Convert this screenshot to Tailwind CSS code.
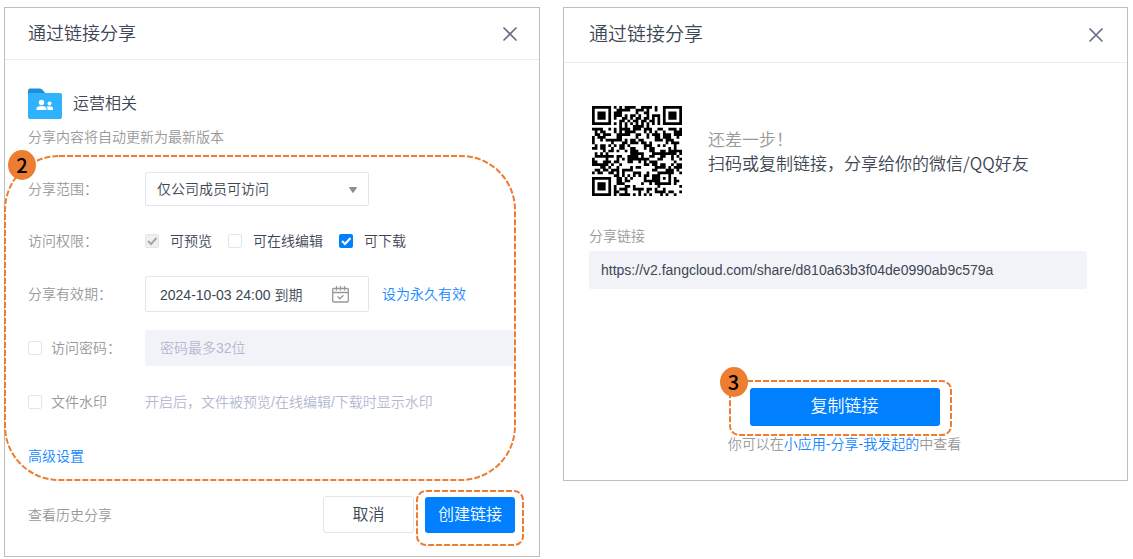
<!DOCTYPE html>
<html lang="zh-CN">
<head>
<meta charset="utf-8">
<meta name="viewport" content="width=device-width, initial-scale=1">
<title>通过链接分享</title>
<script src="https://cdn.jsdelivr.net/npm/@tailwindcss/browser@4"></script>
</head>
<body class="bg-white font-['Liberation_Sans','Noto_Sans_CJK_SC',sans-serif] text-sm font-[350] text-[#3d4653]">
<main class="grid grid-cols-[536fr_565fr] items-start gap-[23px] pt-[7px] pr-[5px] pb-0.5 pl-1">

  <section class="border border-[#bfbfbf]" aria-labelledby="t1">
    <header class="flex h-[52px] items-center justify-between border-b border-[#ebecf0] pr-[22px] pl-[23px]">
      <h1 id="t1" class="text-lg font-[350]">通过链接分享</h1>
      <button type="button" aria-label="关闭">
        <svg class="size-[14px]" viewBox="0 0 14 14" fill="none" stroke="#666e88" stroke-width="1.7" stroke-linecap="round"><path d="M1 1l12 12M13 1L1 13"/></svg>
      </button>
    </header>
    <form class="pt-7">
      <div class="flex h-8 items-center gap-[11px] px-[23px]">
        <svg class="h-8 w-[34px]" viewBox="0 0 34 32"><path d="M0 2.5Q0 .5 2 .5h9.5q1.5 0 2.600 1L17 4.500v8H0z" fill="#2090d6"/><path d="M0 6.500q0-1.500 1.500-1.500H32q2 0 2 2v22q0 2-2 2H2q-2 0-2-2z" fill="#2fb3ff"/><g fill="#fff"><circle cx="13.500" cy="14.500" r="2.700"/><path d="M8.500 22v-1.500q0-2.500 5-2.500t5 2.500V22z"/><circle cx="21.500" cy="15.500" r="2"/><path d="M19.500 22v-1.500q0-1.200-.8-2 .8-.3 2.500-.3 3.800 0 3.800 2.300V22z"/></g></svg>
        <span class="text-base">运营相关</span>
      </div>
      <p class="flex h-[34px] items-center px-[23px] text-[#999]">分享内容将自动更新为最新版本</p>

      <div class="relative pt-[18px] pr-6 pb-3 pl-[23px]">
        <div class="flex h-[34px] items-center">
          <label for="scope" class="w-[117px] shrink-0 text-[#999]">分享范围：</label>
          <div class="relative h-full w-56">
            <select id="scope" class="h-full w-full appearance-none rounded-xs border border-[#e4e5ec] bg-white pl-[11px]"><option>仅公司成员可访问</option></select>
            <svg class="pointer-events-none absolute top-[15px] right-3 h-1.5 w-2" viewBox="0 0 8 6"><path d="M.5 0h7q.7.400.2 1L4.800 5.200q-.8 1-1.600 0L.3 1Q-.2.400.5 0z" fill="#8e8e8e"/></svg>
          </div>
        </div>

        <fieldset class="mt-[23px] flex h-6 items-center">
          <legend class="float-left w-[117px] shrink-0 text-[#999]">访问权限：</legend>
          <div class="flex gap-4">
            <label class="flex items-center gap-[11px]"><span class="grid"><input type="checkbox" checked disabled class="col-start-1 row-start-1 size-[14px] appearance-none rounded-xs border border-[#e4e5ec] bg-[#f0f0f2]"><svg class="col-start-1 row-start-1 size-[14px]" viewBox="0 0 14 14" fill="none" stroke="#a6a6a6" stroke-width="2"><path d="M3 7l3 3 5.500-6"/></svg></span>可预览</label>
            <label class="flex items-center gap-[11px]"><input type="checkbox" class="size-[14px] appearance-none rounded-xs border border-[#e4e5ec] bg-white">可在线编辑</label>
            <label class="flex items-center gap-[11px]"><span class="grid"><input type="checkbox" checked class="col-start-1 row-start-1 size-[14px] appearance-none rounded-xs bg-[#0080ff]"><svg class="pointer-events-none col-start-1 row-start-1 size-[14px]" viewBox="0 0 14 14" fill="none" stroke="#fff" stroke-width="2"><path d="M3 7l3 3 5.500-6"/></svg></span>可下载</label>
          </div>
        </fieldset>

        <div class="mt-[23px] flex h-9 items-center">
          <label for="expiry" class="w-[117px] shrink-0 text-[#999]">分享有效期：</label>
          <div class="relative h-full w-56">
            <input id="expiry" type="text" value="2024-10-03 24:00 到期" class="h-full w-full rounded-xs border border-[#e4e5ec] pl-3.5">
            <button type="button" aria-label="选择日期" class="absolute top-2.5 right-5">
              <svg class="size-[17px]" viewBox="0 0 17 17" fill="none" stroke="#999" stroke-width="1.300"><rect x=".7" y="2.500" width="15.600" height="13.500" rx="1"/><path d="M.7 6.500h15.600M4.500 0v4.500M8.500 0v4.500M12.500 0v4.500M5.500 10.500l2.300 2.300 3.700-3.600"/></svg>
            </button>
          </div>
          <a href="#" class="ml-[13px] text-[#1687ff]">设为永久有效</a>
        </div>

        <div class="mt-[18px] flex h-9 items-center">
          <label class="flex w-[117px] shrink-0 items-center gap-[9px] text-[#999]"><input type="checkbox" class="size-[14px] appearance-none rounded-xs border border-[#e4e5ec]">访问密码：</label>
          <input type="text" disabled aria-label="访问密码" placeholder="密码最多32位" class="h-full w-full min-w-0 rounded-l-xs bg-[#f2f3f9] pl-[15px] placeholder:text-[#b4b8d0]">
        </div>

        <div class="mt-6 flex h-6 items-center">
          <label class="flex w-[117px] shrink-0 items-center gap-[9px] text-[#999]"><input type="checkbox" class="size-[14px] appearance-none rounded-xs border border-[#e4e5ec]">文件水印</label>
          <span class="whitespace-nowrap text-[#b4b8d0]">开启后，文件被预览/在线编辑/下载时显示水印</span>
        </div>

        <div class="mt-[30px] flex h-6 items-center"><a href="#" class="text-[#1687ff]">高级设置</a></div>

        <svg class="pointer-events-none absolute top-0.5 left-0 h-[calc(100%-2px)] w-[calc(100%-24px)] overflow-visible" fill="none" stroke="#ed7d31" stroke-width="2" stroke-dasharray="6 2"><rect width="100%" height="100%" rx="54"/></svg>
        <span class="absolute -top-1 left-[3px] flex h-[30px] w-7 items-center justify-center rounded-[50%] bg-[#ed7d31] font-['Noto_Sans_CJK_SC',sans-serif] text-xl font-medium text-black">2</span>
      </div>

      <footer class="mt-4 mb-[23px] flex h-[37px] items-center pr-6 pl-[23px]">
        <a href="#" class="mr-auto text-[#999]">查看历史分享</a>
        <button type="button" class="h-full w-[91px] rounded-[3px] border border-[#e4e5ec] text-base">取消</button>
        <div class="relative ml-[11px] h-9 w-[90px]">
          <button type="submit" class="h-full w-full rounded-[3px] bg-[#0080ff] text-base text-white">创建链接</button>
          <svg class="pointer-events-none absolute -top-1.5 -left-2 h-[calc(100%+18px)] w-[calc(100%+16px)] overflow-visible" fill="none" stroke="#ed7d31" stroke-width="2" stroke-dasharray="6 2"><rect width="100%" height="100%" rx="9"/></svg>
        </div>
      </footer>
    </form>
  </section>

  <section class="border border-[#bfbfbf]" aria-labelledby="t2">
    <header class="flex h-[55px] items-center justify-between border-b border-[#ebecf0] pr-6 pl-[25px]">
      <h1 id="t2" class="text-[19px] font-[350]">通过链接分享</h1>
      <button type="button" aria-label="关闭">
        <svg class="size-[14px]" viewBox="0 0 14 14" fill="none" stroke="#666e88" stroke-width="1.7" stroke-linecap="round"><path d="M1 1l12 12M13 1L1 13"/></svg>
      </button>
    </header>
    <div class="pt-[43px] pr-10 pb-6 pl-[25px]">
      <div class="flex items-center gap-[26px] pl-[3px]">
        <svg id="qr" class="size-[90px] shrink-0" viewBox="0 0 33 33" role="img" aria-label="分享二维码"><path fill="#000"/></svg>
        <p class="font-['Noto_Sans_CJK_SC',sans-serif] text-[17px] leading-6 whitespace-nowrap"><span class="text-[#999]">还差一步！</span><br>扫码或复制链接，分享给你的微信/QQ好友</p>
      </div>
      <label for="url" class="mt-7 flex h-6 items-center text-[#999]">分享链接</label>
      <input id="url" type="text" readonly value="https://v2.fangcloud.com/share/d810a63b3f04de0990ab9c579a" class="mt-[3px] h-[38px] w-full rounded-xs bg-[#f2f3f9] px-3">
    </div>
    <div class="flex flex-col items-center pt-[75px] pr-0.5 pb-6">
      <div class="relative h-[38px] w-[190px]">
        <button type="button" class="h-full w-full rounded-[3px] bg-[#0080ff] text-[17px] text-white">复制链接</button>
        <svg class="pointer-events-none absolute -top-[7px] -left-5 h-[calc(100%+16px)] w-[calc(100%+31px)] overflow-visible" fill="none" stroke="#ed7d31" stroke-width="2" stroke-dasharray="6 2"><rect width="100%" height="100%" rx="9"/></svg>
        <span class="absolute -top-[21px] -left-[30px] flex h-[30px] w-7 items-center justify-center rounded-[50%] bg-[#ed7d31] font-['Noto_Sans_CJK_SC',sans-serif] text-xl font-medium text-black">3</span>
      </div>
      <p class="mt-1.5 flex h-6 items-center text-[#999]">你可以在<a href="#" class="text-[#1687ff]">小应用-分享-我发起的</a>中查看</p>
    </div>
  </section>
</main>
<script>
// QR code, version 4 (33 modules), level L: 80 data and 20 correction codewords.
function qr(text, mask) {
  const N = 33, bits = [];
  const put = (v, n) => { for (let i = n - 1; i >= 0; i--) bits.push(v >> i & 1); };
  put(4, 4); put(text.length, 8);
  for (const c of text) put(c.charCodeAt(0), 8);
  put(0, 4);
  while (bits.length % 8) bits.push(0);
  for (let p = 0; bits.length < 640; p ^= 1) put(p ? 17 : 236, 8);
  const data = [];
  for (let i = 0; i < 640; i += 8) data.push(parseInt(bits.slice(i, i + 8).join(''), 2));
  const mul = (a, b) => { let r = 0; for (let i = 7; i >= 0; i--) { r = (r << 1) ^ ((r >> 7) * 285); r ^= (b >> i & 1) * a; } return r; };
  const gen = Array(20).fill(0); gen[19] = 1;
  for (let i = 0, root = 1; i < 20; i++, root = mul(root, 2))
    for (let j = 0; j < 20; j++) { gen[j] = mul(gen[j], root); if (j < 19) gen[j] ^= gen[j + 1]; }
  const ec = Array(20).fill(0);
  for (const d of data) { const f = d ^ ec.shift(); ec.push(0); gen.forEach((g, i) => ec[i] ^= mul(g, f)); }
  const words = data.concat(ec);
  const m = Array.from({ length: N }, () => Array(N).fill(0)), used = m.map(r => r.slice());
  const set = (x, y, v) => { if (x >= 0 && y >= 0 && x < N && y < N) { m[y][x] = v ? 1 : 0; used[y][x] = 1; } };
  for (let i = 0; i < N; i++) { set(6, i, i % 2 === 0); set(i, 6, i % 2 === 0); }
  for (const [cx, cy] of [[3, 3], [N - 4, 3], [3, N - 4]])
    for (let dy = -4; dy <= 4; dy++) for (let dx = -4; dx <= 4; dx++) {
      const d = Math.max(Math.abs(dx), Math.abs(dy)); set(cx + dx, cy + dy, d !== 2 && d !== 4);
    }
  for (let dy = -2; dy <= 2; dy++) for (let dx = -2; dx <= 2; dx++) set(26 + dx, 26 + dy, Math.max(Math.abs(dx), Math.abs(dy)) !== 1);
  const f0 = 8 | mask; let rem = f0;
  for (let i = 0; i < 10; i++) rem = (rem << 1) ^ ((rem >> 9) * 0x537);
  const f = (f0 << 10 | rem) ^ 0x5412, b = i => f >> i & 1;
  for (let i = 0; i <= 5; i++) set(8, i, b(i));
  set(8, 7, b(6)); set(8, 8, b(7)); set(7, 8, b(8));
  for (let i = 9; i < 15; i++) set(14 - i, 8, b(i));
  for (let i = 0; i < 8; i++) set(N - 1 - i, 8, b(i));
  for (let i = 8; i < 15; i++) set(8, N - 15 + i, b(i));
  set(8, N - 8, 1);
  const rules = [(x, y) => (x + y) % 2, (x, y) => y % 2, x => x % 3, (x, y) => (x + y) % 3,
    (x, y) => ((x / 3 | 0) + (y / 2 | 0)) % 2, (x, y) => x * y % 2 + x * y % 3,
    (x, y) => (x * y % 2 + x * y % 3) % 2, (x, y) => ((x + y) % 2 + x * y % 3) % 2];
  let k = 0;
  for (let r = N - 1; r >= 1; r -= 2) {
    if (r === 6) r = 5;
    for (let v = 0; v < N; v++) for (let j = 0; j < 2; j++) {
      const x = r - j, y = (r + 1 & 2) === 0 ? N - 1 - v : v;
      if (used[y][x]) continue;
      let bit = k < 800 ? words[k >> 3] >> (7 - (k & 7)) & 1 : 0; k++;
      m[y][x] = bit ^ (rules[mask](x, y) === 0 ? 1 : 0);
    }
  }
  let d = '';
  m.forEach((row, y) => row.forEach((v, x) => { if (v) d += `M${x} ${y}h1v1h-1z`; }));
  return d;
}
document.querySelector('#qr path').setAttribute('d', qr(document.getElementById('url').value, 3));
</script>
</body>
</html>
